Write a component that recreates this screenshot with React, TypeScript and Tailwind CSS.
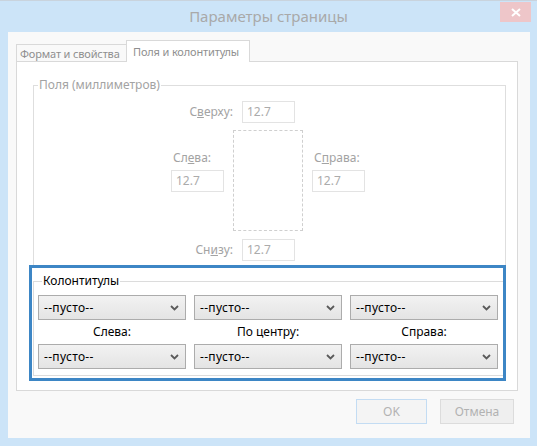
import React from 'react';

function Chevron() {
  return (
    <svg width="9" height="6" viewBox="0 0 9 6" aria-hidden="true">
      <path d="M1 1l3.5 3.5L8 1" fill="none" stroke="#5a5a5a" strokeWidth="1.8" />
    </svg>
  );
}

function Combo() {
  return (
    <div className="flex h-[25px] w-[148px] items-center justify-between border border-[#acacac] bg-linear-to-b from-[#f2f2f2] to-[#e4e4e4] pl-[5px] pr-[6px] text-black">
      <span className="tracking-[0.3px]">--пусто--</span>
      <Chevron />
    </div>
  );
}

function Field() {
  return (
    <div className="flex h-[22px] w-[53px] items-center border border-[#e3e3e3] bg-white pl-[4px] text-[#ababab]">12.7</div>
  );
}

export default function App() {
  return (
    <div className="flex h-[446px] w-[537px] flex-col border-t border-[#c9d3dd] bg-[#cce4f8] font-['Noto_Sans',sans-serif] text-[12px] leading-[16px]">
      {/* title bar */}
      <div className="relative flex h-[31px] items-center justify-center pb-[1px]">
        <span className="text-[15px] text-[#a9a9a9]">Параметры страницы</span>
        <div className="absolute right-[6px] top-[1px] flex h-[20px] w-[31px] items-center justify-center bg-[#eec6c9]">
          <svg width="10" height="9" viewBox="0 0 10 9" aria-hidden="true">
            <path d="M1 1l8 7M9 1L1 8" stroke="#fff" strokeWidth="2" />
          </svg>
        </div>
      </div>

      <div className="ml-[8px] mr-[7px] flex h-[406px] flex-col bg-[#f9f9f9] pl-[8px] pr-[12px] pt-[8px]">
        {/* tabs */}
        <div className="relative z-10 -mb-px flex h-[22px] items-end whitespace-nowrap text-[11px] tracking-[-0.15px]">
          <div className="flex h-[18px] w-[110px] items-center border border-b-0 border-r-0 border-[#d9d9d9] pl-[3px] text-[#8f8f8f]">Формат и свойства</div>
          <div className="flex h-[22px] w-[124px] items-center border border-b-0 border-[#d9d9d9] bg-white pl-[6px] text-[#8f8f8f]">Поля и колонтитулы</div>
        </div>

        {/* panel */}
        <div className="flex h-[330px] flex-col border border-[#d9d9d9] bg-white pt-[15px]">
          <fieldset className="ml-[16px] w-[473px] border border-b-0 border-[#dedede] pb-[4px]">
            <legend className="ml-[4px] px-[1px] text-[#a3a3a3]">Поля (миллиметров)</legend>
            <div className="mt-[8px] flex items-center">
              <div className="w-[208px] pr-[9px] text-right text-[#a3a3a3]">
                С<span className="underline">в</span>ерху:
              </div>
              <Field />
            </div>
            <div className="mt-[7px] flex h-[101px]">
              <div className="w-[137px]" />
              <div className="flex w-[53px] flex-col">
                <span className="mt-[20px] pl-[2px] text-[#a3a3a3]">
                  Сл<span className="underline">е</span>ва:
                </span>
                <div className="mt-[4px]">
                  <Field />
                </div>
              </div>
              <div className="ml-[9px] h-[101px] w-[70px] border border-dashed border-[#cfcfcf]" />
              <div className="ml-[9px] flex w-[53px] flex-col">
                <span className="mt-[20px] pl-[2px] text-[#a3a3a3]">
                  С<span className="underline">п</span>рава:
                </span>
                <div className="mt-[4px]">
                  <Field />
                </div>
              </div>
            </div>
            <div className="mt-[8px] flex items-center">
              <div className="w-[208px] pr-[9px] text-right text-[#a3a3a3]">
                Сн<span className="underline">и</span>зу:
              </div>
              <Field />
            </div>
          </fieldset>

          <div className="ml-[12px] flex h-[116px] w-[477px] border-[3px] border-[#3d86c5] pl-px">
            <fieldset className="mt-[5px] mb-[2px] flex-1 border border-r-0 border-[#dcdcdc] pb-[7px] pl-[4px]">
              <legend className="ml-[4px] px-[1px] text-black">Колонтитулы</legend>
              <div className="mt-[6px] flex gap-[8px]">
                <Combo />
                <Combo />
                <Combo />
              </div>
              <div className="mt-[4px] grid w-[460px] grid-cols-3 gap-[8px] text-center text-black">
                <span>Слева:</span>
                <span>По центру:</span>
                <span>Справа:</span>
              </div>
              <div className="mt-[4px] flex gap-[8px]">
                <Combo />
                <Combo />
                <Combo />
              </div>
            </fieldset>
          </div>
        </div>

        {/* buttons */}
        <div className="mt-[8px] flex justify-end gap-[13px] pr-[4px]">
          <div className="flex h-[25px] w-[71px] items-center justify-center border border-[#c3dcf3] bg-[#f4f4f4] text-[#b2b2b2]">OK</div>
          <div className="flex h-[25px] w-[74px] items-center justify-center border border-[#dcdcdc] bg-[#efefef] text-[#b2b2b2]">Отмена</div>
        </div>
      </div>
    </div>
  );
}
